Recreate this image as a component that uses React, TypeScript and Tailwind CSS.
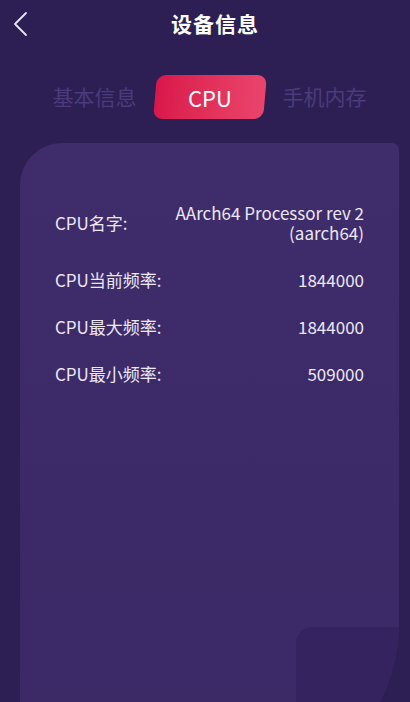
const rows = [
  { label: 'CPU名字:', value: ['AArch64 Processor rev 2', '(aarch64)'] },
  { label: 'CPU当前频率:', value: ['1844000'] },
  { label: 'CPU最大频率:', value: ['1844000'] },
  { label: 'CPU最小频率:', value: ['509000'] },
];

const tabs = ['基本信息', 'CPU', '手机内存'];

export default function App() {
  return (
    <div
      className="relative h-[702px] w-[410px] overflow-hidden bg-[#2d1f54] text-white"
      style={{ fontFamily: '"Noto Sans CJK SC", "Noto Sans", sans-serif' }}
    >
      <header className="grid h-[48px] grid-cols-[70px_1fr_50px] items-center">
        <button className="flex h-full items-center pl-[11px]">
          <svg width="18" height="26" viewBox="0 0 18 26" fill="none">
            <path d="M15 2 L4 13 L15 24" stroke="#e8e4f0" strokeWidth="1.8" strokeLinecap="round" strokeLinejoin="round" />
          </svg>
        </button>
        <h1 className="text-center text-[21px] font-bold tracking-[1px]">设备信息</h1>
        <span />
      </header>

      <nav className="ml-[37px] mt-[27px] grid h-[44px] w-[345px] grid-cols-3 items-center">
        {tabs.map((t) =>
          t === 'CPU' ? (
            <div key={t} className="flex justify-center">
              <div className="flex h-[44px] w-[110px] -skew-x-[5deg] items-center justify-center rounded-[9px] bg-gradient-to-r from-[#d9164a] to-[#ea446c]">
                <span className="skew-x-[5deg] text-[22px] text-white">CPU</span>
              </div>
            </div>
          ) : (
            <span key={t} className="text-center text-[21px] text-[#4c3b7c]">
              {t}
            </span>
          ),
        )}
      </nav>

      <section className="relative ml-[20px] mr-[11px] mt-[24px] h-[654px] overflow-hidden rounded-tl-[42px] rounded-tr-[7px] rounded-br-[174px] bg-gradient-to-b from-[#3e2c6b] to-[#3b2966] px-[35px] pt-[60px]">
        <div className="flex flex-col gap-[27px]">
          {rows.map((r) => (
            <div key={r.label} className="flex items-center justify-between text-[17px] leading-[20px] text-[#ece8f5]">
              <span>{r.label}</span>
              <span className="text-right">
                {r.value.map((v) => (
                  <span key={v} className="block">
                    {v}
                  </span>
                ))}
              </span>
            </div>
          ))}
        </div>
        <div className="absolute left-[276px] top-[484px] h-[200px] w-[200px] rounded-tl-[16px] bg-[#35235f]" />
      </section>
    </div>
  );
}
